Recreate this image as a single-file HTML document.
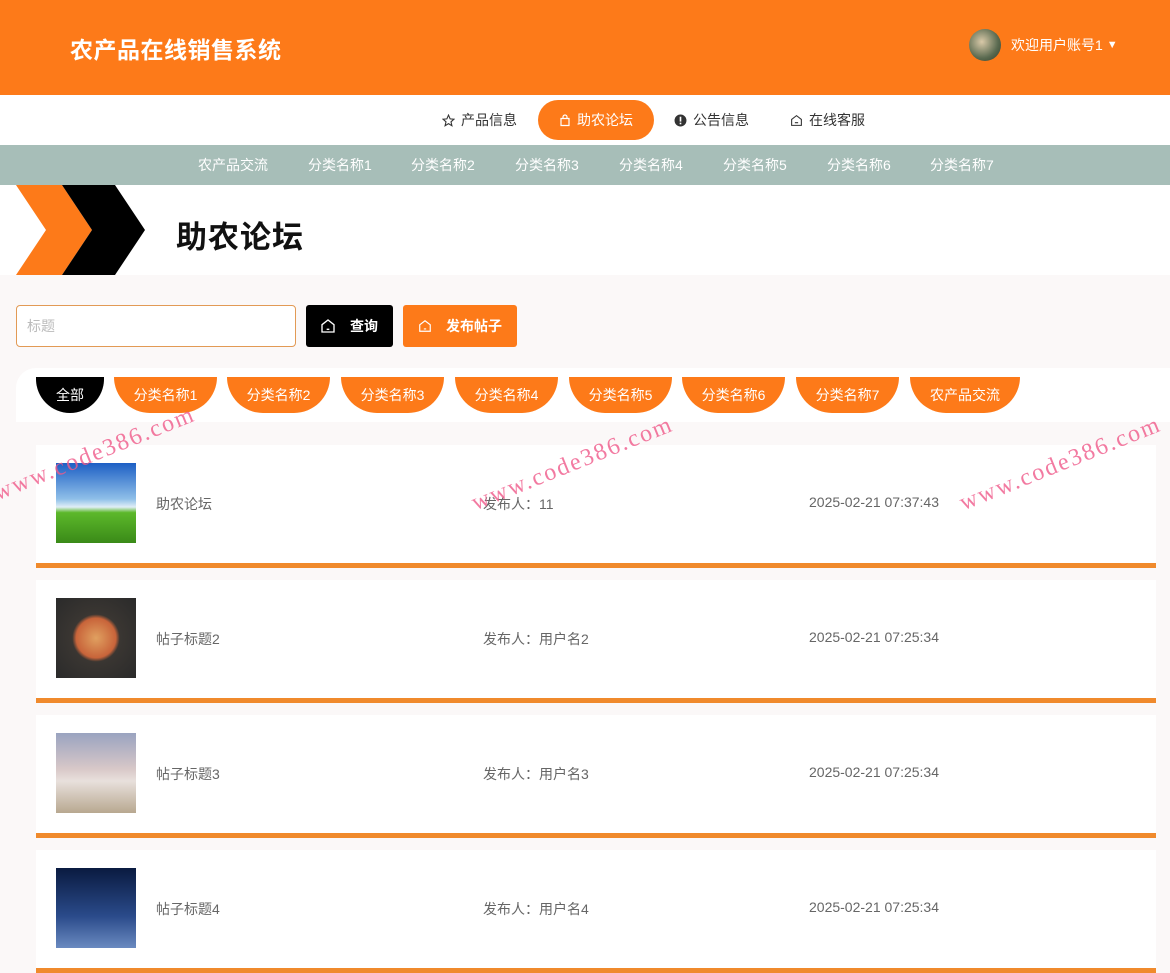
<!DOCTYPE html>
<html><head><meta charset="utf-8"><style>
*{margin:0;padding:0;box-sizing:border-box}
body{width:1170px;height:932px;overflow:hidden;background:#fbf8f8;font-family:"Liberation Sans","Noto Sans CJK SC",sans-serif;position:relative}
.hd{height:95px;background:#fd7a19;position:relative}
.hd .t{position:absolute;left:70px;top:31px;font-size:23px;font-weight:bold;color:#fff;letter-spacing:0.5px}
.hd .u{position:absolute;left:969px;top:29px;display:flex;align-items:center;color:#fff;font-size:14px}
.av{width:32px;height:32px;border-radius:50%;background:radial-gradient(circle at 40% 40%,#d9c9a8,#5a6a50 60%,#2d3a2a);margin-right:10px}
.nav{height:50px;background:#fff;position:relative;font-size:14px;color:#333}
.nav span{position:absolute;top:0;height:50px;line-height:50px;display:flex;align-items:center;gap:6px}
.nav .act{top:5px;height:40px;line-height:40px;background:#fd7a19;color:#fff;border-radius:20px;left:538px;width:116px;justify-content:center}
.cat{height:40px;background:#a7beb8;position:relative;color:#fff;font-size:14px}
.cat span{position:absolute;top:0;line-height:40px}
.ban{height:90px;background:#fff;position:relative}
.ban h1{position:absolute;left:176px;top:27px;font-size:31px;color:#111;letter-spacing:1px}
.inp{position:absolute;left:16px;top:305px;width:280px;height:42px;border:1px solid #e29a55;border-radius:4px;background:#fff;color:#bbb;font-size:14px;line-height:40px;padding-left:10px}
.btn{position:absolute;top:305px;height:42px;border-radius:3px;color:#fff;font-size:14px;font-weight:bold;display:flex;align-items:center;gap:14px}
.tabs{position:absolute;left:16px;top:368px;width:1154px;height:54px;background:#fff;border-top-left-radius:20px}
.tab{position:absolute;top:377px;height:36px;line-height:36px;text-align:center;color:#fff;font-size:14px;background:#fd7a19;border-radius:0 0 40px 40px;width:103px}
.card{position:absolute;left:36px;width:1120px;height:123px;background:#fff;border-bottom:5px solid #f08a2c}
.card .im{position:absolute;left:20px;top:18px;width:80px;height:80px}
.card span{position:absolute;top:49px;font-size:14px;color:#666}
.wm{position:absolute;color:#f05a8a;font-family:"Liberation Serif",serif;font-size:24px;transform:rotate(-22deg);transform-origin:left bottom;letter-spacing:2px;opacity:.8}
</style></head><body>
<div class="hd"><div class="t">农产品在线销售系统</div>
<div class="u"><div class="av"></div>欢迎用户账号1&nbsp;<span style="font-size:11px">▼</span></div></div>
<div class="nav">
<span style="left:442px"><svg width="13" height="13" viewBox="0 0 24 24"><path d="M12 2l3 7 7 .6-5.4 4.8 1.7 7.2L12 17.8 5.7 21.6l1.7-7.2L2 9.6 9 9z" fill="none" stroke="#333" stroke-width="2"/></svg>产品信息</span>
<span class="act"><svg width="12" height="13" viewBox="0 0 24 24"><path d="M4 8h16v14H4zM8 8V5a4 4 0 0 1 8 0v3" fill="none" stroke="#fff" stroke-width="2.4"/></svg>助农论坛</span>
<span style="left:674px"><svg width="13" height="13" viewBox="0 0 24 24"><circle cx="12" cy="12" r="11" fill="#333"/><rect x="10.5" y="5" width="3" height="9" fill="#fff"/><rect x="10.5" y="16" width="3" height="3" fill="#fff"/></svg>公告信息</span>
<span style="left:790px"><svg width="13" height="13" viewBox="0 0 24 24"><path d="M3 10l9-7 9 7v11H3z M9 16h6" fill="none" stroke="#333" stroke-width="2"/></svg>在线客服</span>
</div>
<div class="cat">
<span style="left:198px">农产品交流</span><span style="left:308px">分类名称1</span><span style="left:411px">分类名称2</span><span style="left:515px">分类名称3</span><span style="left:619px">分类名称4</span><span style="left:723px">分类名称5</span><span style="left:827px">分类名称6</span><span style="left:930px">分类名称7</span>
</div>
<div class="ban">
<svg width="150" height="90" style="position:absolute;left:0;top:0"><polygon points="16,0 62,0 92,45 62,90 16,90 46,45" fill="#fd7a19"/><polygon points="62,0 115,0 145,45 115,90 62,90 92,45" fill="#000"/></svg>
<h1>助农论坛</h1></div>
<div class="inp">标题</div>
<div class="btn" style="left:306px;width:87px;background:#000;padding-left:14px"><svg width="16" height="16" viewBox="0 0 24 24"><path d="M3 10l9-7 9 7v11H3z M10 17h4" fill="none" stroke="#fff" stroke-width="2"/></svg>查询</div>
<div class="btn" style="left:403px;width:114px;background:#fd7a19;padding-left:15px"><svg width="14" height="14" viewBox="0 0 24 24"><path d="M3 10l9-7 9 7v11H3z M10 17h4" fill="none" stroke="#fff" stroke-width="2"/></svg>发布帖子</div>
<div class="tabs"></div>
<div class="tab" style="left:36px;width:68px;background:#000">全部</div>
<div class="tab" style="left:114px">分类名称1</div>
<div class="tab" style="left:227px">分类名称2</div>
<div class="tab" style="left:341px">分类名称3</div>
<div class="tab" style="left:455px">分类名称4</div>
<div class="tab" style="left:569px">分类名称5</div>
<div class="tab" style="left:682px">分类名称6</div>
<div class="tab" style="left:796px">分类名称7</div>
<div class="tab" style="left:910px;width:110px">农产品交流</div>
<div class="card" style="top:445px"><div class="im" style="background:linear-gradient(#1d5fc4,#8fbfe8 45%,#e0eef6 55%,#5cb82a 62%,#3a8a18)"></div><span style="left:120px">助农论坛</span><span style="left:447px">发布人：11</span><span style="left:773px">2025-02-21 07:37:43</span></div>
<div class="card" style="top:580px"><div class="im" style="background:radial-gradient(circle at 50% 50%,#e0a060 0,#c8643a 35%,#3a3632 42%,#2a2a2a)"></div><span style="left:120px">帖子标题2</span><span style="left:447px">发布人：用户名2</span><span style="left:773px">2025-02-21 07:25:34</span></div>
<div class="card" style="top:715px"><div class="im" style="background:linear-gradient(#9aa3c0,#d8c8c8 45%,#e8e0dc 60%,#b8a890)"></div><span style="left:120px">帖子标题3</span><span style="left:447px">发布人：用户名3</span><span style="left:773px">2025-02-21 07:25:34</span></div>
<div class="card" style="top:850px"><div class="im" style="background:linear-gradient(#0a1a40,#2a4a8a 60%,#6a8ac0)"></div><span style="left:120px">帖子标题4</span><span style="left:447px">发布人：用户名4</span><span style="left:773px">2025-02-21 07:25:34</span></div>
<div class="wm" style="left:0;top:480px">www.code386.com</div>
<div class="wm" style="left:478px;top:490px">www.code386.com</div>
<div class="wm" style="left:966px;top:490px">www.code386.com</div>
</body></html>
